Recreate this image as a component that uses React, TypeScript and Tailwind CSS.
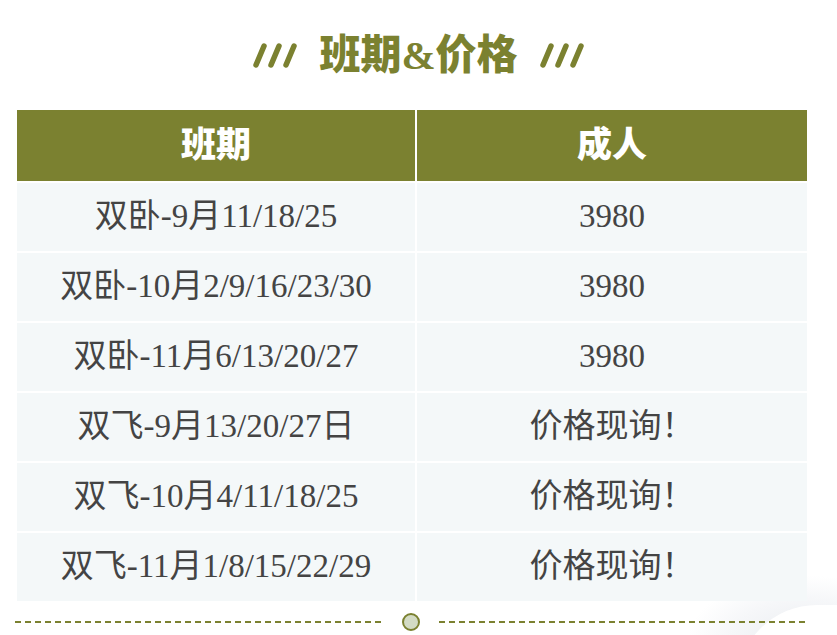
import React from 'react';

const rows = [
  { date: '双卧-9月11/18/25', price: '3980' },
  { date: '双卧-10月2/9/16/23/30', price: '3980' },
  { date: '双卧-11月6/13/20/27', price: '3980' },
  { date: '双飞-9月13/20/27日', price: '价格现询！' },
  { date: '双飞-10月4/11/18/25', price: '价格现询！' },
  { date: '双飞-11月1/8/15/22/29', price: '价格现询！' },
];

const Slashes = () => (
  <svg width="44" height="28" viewBox="0 0 44 28" className="shrink-0">
    {[0, 15, 30].map((x) => (
      <line
        key={x}
        x1={x + 11}
        y1={4}
        x2={x + 3}
        y2={23}
        stroke="#7b8130"
        strokeWidth="5.5"
        strokeLinecap="round"
      />
    ))}
  </svg>
);

export default function App() {
  return (
    <div
      className="relative w-[837px] h-[635px] overflow-hidden bg-white"
      style={{ fontFamily: '"Liberation Serif", "Noto Sans CJK SC", serif' }}
    >
      {/* corner decoration */}
      <div className="absolute right-[-90px] bottom-[-70px] w-[240px] h-[130px] rounded-full bg-[radial-gradient(ellipse_at_center,#e9ecf0_0%,#f6f7f9_45%,#ffffff_70%)]" />
      <div className="absolute right-[-60px] bottom-[-50px] w-[160px] h-[80px] rounded-tl-[90px] bg-white" />

      {/* title */}
      <div className="relative flex items-center justify-center gap-[22px] h-[110px] pt-[1px]">
        <Slashes />
        <h1 className="text-[41px] leading-none font-black text-[#7b8130]">班期&amp;价格</h1>
        <Slashes />
      </div>

      {/* table */}
      <div className="relative ml-[17px] w-[790px] grid grid-cols-[398px_390px] gap-[2px]">
        <div className="h-[71px] bg-[#7b8130] flex items-center justify-center text-white text-[35px] font-black pt-[1px]">
          班期
        </div>
        <div className="h-[71px] bg-[#7b8130] flex items-center justify-center text-white text-[35px] font-black pt-[1px]">
          成人
        </div>
        {rows.map((r) => (
          <React.Fragment key={r.date}>
            <div className="h-[68px] bg-[#f4f8f9] flex items-center justify-center text-[#444444] text-[33px] pb-[1px]">
              {r.date}
            </div>
            <div className="h-[68px] bg-[#f4f8f9] flex items-center justify-center text-[#444444] text-[33px] pb-[1px]">
              {r.price}
            </div>
          </React.Fragment>
        ))}
      </div>

      {/* divider */}
      <div className="relative flex items-center mt-[12px] ml-[15px] w-[794px]">
        <div className="h-[2px] w-[368px] bg-[repeating-linear-gradient(90deg,#7b8130_0_6px,transparent_6px_10px)]" />
        <div className="mx-[19px] w-[18px] h-[18px] rounded-full border-2 border-[#7b8130] bg-[#d3dbc4]" />
        <div className="h-[2px] w-[368px] bg-[repeating-linear-gradient(90deg,#7b8130_0_6px,transparent_6px_10px)]" />
      </div>
    </div>
  );
}
